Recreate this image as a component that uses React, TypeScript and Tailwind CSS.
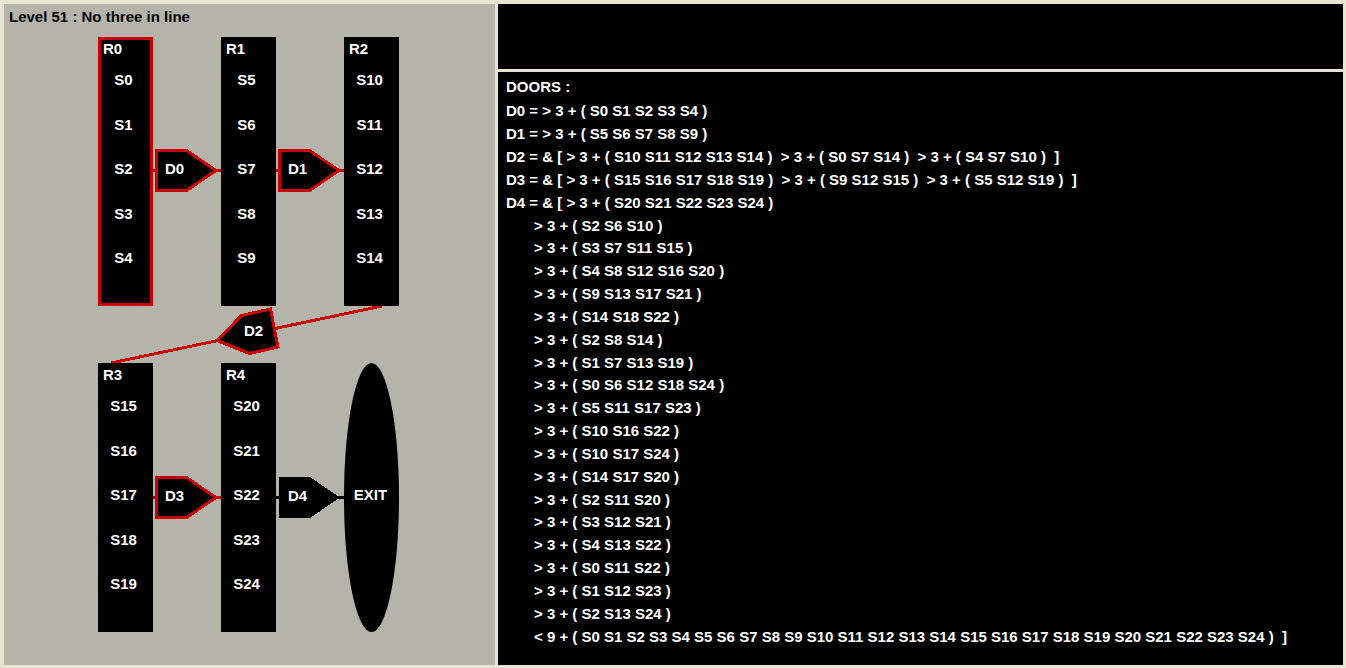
type RoomData = { name: string; sensors: string[]; current?: boolean };

const rooms: RoomData[] = [
  { name: "R0", sensors: ["S0", "S1", "S2", "S3", "S4"], current: true },
  { name: "R1", sensors: ["S5", "S6", "S7", "S8", "S9"] },
  { name: "R2", sensors: ["S10", "S11", "S12", "S13", "S14"] },
  { name: "R3", sensors: ["S15", "S16", "S17", "S18", "S19"] },
  { name: "R4", sensors: ["S20", "S21", "S22", "S23", "S24"] },
];

const doorRules: string[] = [
  "D0 = > 3 + ( S0 S1 S2 S3 S4 )",
  "D1 = > 3 + ( S5 S6 S7 S8 S9 )",
  "D2 = & [ > 3 + ( S10 S11 S12 S13 S14 )  > 3 + ( S0 S7 S14 )  > 3 + ( S4 S7 S10 )  ]",
  "D3 = & [ > 3 + ( S15 S16 S17 S18 S19 )  > 3 + ( S9 S12 S15 )  > 3 + ( S5 S12 S19 )  ]",
  "D4 = & [ > 3 + ( S20 S21 S22 S23 S24 )",
];

const finalDoorTerms: string[] = [
  "> 3 + ( S2 S6 S10 )",
  "> 3 + ( S3 S7 S11 S15 )",
  "> 3 + ( S4 S8 S12 S16 S20 )",
  "> 3 + ( S9 S13 S17 S21 )",
  "> 3 + ( S14 S18 S22 )",
  "> 3 + ( S2 S8 S14 )",
  "> 3 + ( S1 S7 S13 S19 )",
  "> 3 + ( S0 S6 S12 S18 S24 )",
  "> 3 + ( S5 S11 S17 S23 )",
  "> 3 + ( S10 S16 S22 )",
  "> 3 + ( S10 S17 S24 )",
  "> 3 + ( S14 S17 S20 )",
  "> 3 + ( S2 S11 S20 )",
  "> 3 + ( S3 S12 S21 )",
  "> 3 + ( S4 S13 S22 )",
  "> 3 + ( S0 S11 S22 )",
  "> 3 + ( S1 S12 S23 )",
  "> 3 + ( S2 S13 S24 )",
  "< 9 + ( S0 S1 S2 S3 S4 S5 S6 S7 S8 S9 S10 S11 S12 S13 S14 S15 S16 S17 S18 S19 S20 S21 S22 S23 S24 )  ]",
];

const doorLabels = [
  { name: "D0", place: "left-[67px] top-[122px]" },
  { name: "D1", place: "left-[190px] top-[122px]" },
  { name: "D2", place: "left-[146px] top-[284px]" },
  { name: "D3", place: "left-[67px] top-[449px]" },
  { name: "D4", place: "left-[190px] top-[449px]" },
];

function Room({ name, sensors, current }: RoomData) {
  return (
    <section
      className={
        current
          ? "relative bg-black outline-3 -outline-offset-3 outline-[#cc0000]"
          : "relative bg-black"
      }
    >
      <h2 className="pt-0.5 pl-[5px]">{name}</h2>
      <ul className="grid h-[234px] grid-rows-5 pt-[11px] pr-1 text-center">
        {sensors.map((s) => (
          <li key={s}>{s}</li>
        ))}
      </ul>
    </section>
  );
}

function Doors() {
  return (
    <svg
      className="absolute inset-0 h-full w-full"
      viewBox="0 0 301 595"
      shapeRendering="crispEdges"
      aria-hidden="true"
    >
      <g stroke="#cc0000" strokeWidth="3" fill="black">
        <path d="M54 133.5H124M177 133.5H247M54 460.5H124" />
        <path d="M284 269L13 326" />
        <path d="M58.5 113.5H88.5L118 133.5L88.5 153.5H58.5Z" />
        <path d="M181.5 113.5H211.5L241 133.5L211.5 153.5H181.5Z" />
        <path d="M58.5 440.5H88.5L118 460.5L88.5 480.5H58.5Z" />
        <path d="M172.5 272L180 310L151.500 316.500L119 303.5L143.500 278.500Z" />
      </g>
      <path d="M177 460.5H248" stroke="black" strokeWidth="3" />
      <path d="M181 440H212L242 460.5L212 481H181Z" fill="black" />
    </svg>
  );
}

export default function App() {
  return (
    <main className="grid min-h-screen grid-cols-[491fr_845fr] gap-[3px] bg-[#e6e6d2] pt-1 pr-[3px] pb-[3px] pl-1 font-['Liberation_Sans',Arial,sans-serif] text-[15px] leading-5 font-bold text-white">
      <section className="bg-[#b4b4aa]">
        <h1 className="pt-[3px] pl-[5px] text-black">Level 51 : No three in line</h1>
        <div className="relative mt-[10px] ml-[94px] grid w-[301px] auto-rows-[269px] grid-cols-[repeat(3,55px)] gap-x-[68px] gap-y-[57px]">
          <Doors />
          {rooms.map((room) => (
            <Room key={room.name} {...room} />
          ))}
          <div className="relative flex items-center justify-center rounded-[50%] bg-black pr-0.5 pb-1.5">
            EXIT
          </div>
          {doorLabels.map((door) => (
            <span key={door.name} className={`absolute ${door.place}`}>
              {door.name}
            </span>
          ))}
        </div>
      </section>
      <div className="grid grid-rows-[65px_1fr] gap-[3px]">
        <section className="bg-black" />
        <section className="flex flex-col bg-black pb-[17px] pl-2">
          <h2 className="pt-[5px] pb-[3px]">DOORS :</h2>
          <ul className="grid flex-1 auto-rows-fr items-center whitespace-pre">
            {doorRules.map((rule) => (
              <li key={rule}>{rule}</li>
            ))}
            {finalDoorTerms.map((term) => (
              <li key={term} className="pl-7">
                {term}
              </li>
            ))}
          </ul>
        </section>
      </div>
    </main>
  );
}
